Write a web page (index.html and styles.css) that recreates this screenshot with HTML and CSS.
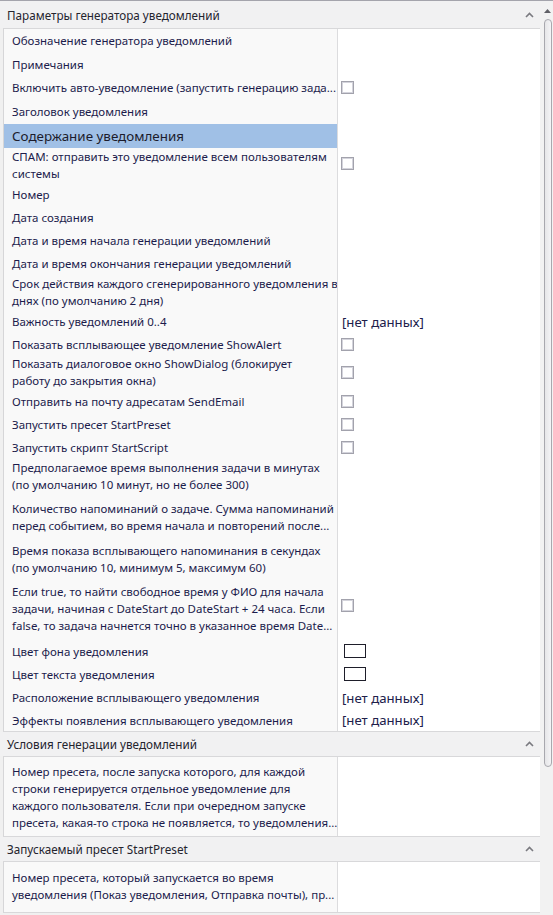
FILE: index.html
```html
<!DOCTYPE html>
<html lang="ru">
<head>
<meta charset="utf-8">
<title>Параметры генератора уведомлений</title>
<link rel="stylesheet" href="styles.css">
</head>
<body>
<div class="window">
  <div class="main">
    <section class="group">
      <div class="ghead ghead-first"><span class="gtitle">Параметры генератора уведомлений</span><svg class="chev" width="9" height="6" viewBox="0 0 9 6"><path d="M1 5 L4.5 1.5 L8 5" fill="none" stroke="#7a7a80" stroke-width="1.6"/></svg></div>
      <div class="grid">
        <div class="row h23"><div class="lbl">Обозначение генератора уведомлений</div><div class="val"></div></div>
        <div class="row h24"><div class="lbl">Примечания</div><div class="val"></div></div>
        <div class="row h23"><div class="lbl">Включить авто-уведомление (запустить генерацию зада...</div><div class="val"><span class="cb"></span></div></div>
        <div class="row h25"><div class="lbl">Заголовок уведомления</div><div class="val"></div></div>
        <div class="row h24 sel"><div class="lbl big">Содержание уведомления</div><div class="val"></div></div>
        <div class="row h35"><div class="lbl two">СПАМ: отправить это уведомление всем пользователям<br>системы</div><div class="val"><span class="cb up2"></span></div></div>
        <div class="row h23"><div class="lbl">Номер</div><div class="val"></div></div>
        <div class="row h23"><div class="lbl">Дата создания</div><div class="val"></div></div>
        <div class="row h23"><div class="lbl">Дата и время начала генерации уведомлений</div><div class="val"></div></div>
        <div class="row h23"><div class="lbl">Дата и время окончания генерации уведомлений</div><div class="val"></div></div>
        <div class="row h35"><div class="lbl two">Срок действия каждого сгенерированного уведомления в<br>днях (по умолчанию 2 дня)</div><div class="val"></div></div>
        <div class="row h23"><div class="lbl">Важность уведомлений 0..4</div><div class="val"><span class="nd">[нет данных]</span></div></div>
        <div class="row h22"><div class="lbl">Показать всплывающее уведомление ShowAlert</div><div class="val"><span class="cb"></span></div></div>
        <div class="row h35"><div class="lbl two">Показать диалоговое окно ShowDialog (блокирует<br>работу до закрытия окна)</div><div class="val"><span class="cb"></span></div></div>
        <div class="row h23"><div class="lbl">Отправить на почту адресатам SendEmail</div><div class="val"><span class="cb"></span></div></div>
        <div class="row h23"><div class="lbl">Запустить пресет StartPreset</div><div class="val"><span class="cb"></span></div></div>
        <div class="row h23"><div class="lbl">Запустить скрипт StartScript</div><div class="val"><span class="cb"></span></div></div>
        <div class="row h41 top"><div class="lbl">Предполагаемое время выполнения задачи в минутах<br>(по умолчанию 10 минут, но не более 300)</div><div class="val"></div></div>
        <div class="row h42 top"><div class="lbl">Количество напоминаний о задаче. Сумма напоминаний<br>перед событием, во время начала и повторений после...</div><div class="val"></div></div>
        <div class="row h41 top"><div class="lbl">Время показа всплывающего напоминания в секундах<br>(по умолчанию 10, минимум 5, максимум 60)</div><div class="val"></div></div>
        <div class="row h57 top"><div class="lbl">Если true, то найти свободное время у ФИО для начала<br>задачи, начиная с DateStart до DateStart + 24 часа. Если<br>false, то задача начнется точно в указанное время Date...</div><div class="val"><span class="cb cb-mid"></span></div></div>
        <div class="row h23"><div class="lbl">Цвет фона уведомления</div><div class="val"><span class="swatch"></span></div></div>
        <div class="row h23"><div class="lbl">Цвет текста уведомления</div><div class="val"><span class="swatch"></span></div></div>
        <div class="row h23"><div class="lbl">Расположение всплывающего уведомления</div><div class="val"><span class="nd">[нет данных]</span></div></div>
        <div class="row h22"><div class="lbl">Эффекты появления всплывающего уведомления</div><div class="val"><span class="nd">[нет данных]</span></div></div>
      </div>
    </section>
    <section class="group">
      <div class="ghead"><span class="gtitle">Условия генерации уведомлений</span><svg class="chev" width="9" height="6" viewBox="0 0 9 6"><path d="M1 5 L4.5 1.5 L8 5" fill="none" stroke="#7a7a80" stroke-width="1.6"/></svg></div>
      <div class="grid">
        <div class="row h79 top pad"><div class="lbl">Номер пресета, после запуска которого, для каждой<br>строки генерируется отдельное уведомление для<br>каждого пользователя. Если при очередном запуске<br>пресета, какая-то строка не появляется, то уведомления...</div><div class="val"></div></div>
      </div>
    </section>
    <section class="group">
      <div class="ghead"><span class="gtitle">Запускаемый пресет StartPreset</span><svg class="chev" width="9" height="6" viewBox="0 0 9 6"><path d="M1 5 L4.5 1.5 L8 5" fill="none" stroke="#7a7a80" stroke-width="1.6"/></svg></div>
      <div class="grid">
        <div class="row h50 top pad2"><div class="lbl">Номер пресета, который запускается во время<br>уведомления (Показ уведомления, Отправка почты), пр...</div><div class="val"></div></div>
      </div>
    </section>
  </div>
  <div class="scrollbar">
    <svg class="sarrow" width="7" height="4" viewBox="0 0 7 4"><path d="M0 4 L3.5 0 L7 4 Z" fill="#606066"/></svg>
    <div class="thumb"></div>
  </div>
</div>
</body>
</html>
```
FILE: styles.css
```css
html, body {
  margin: 0;
  padding: 0;
}
body {
  background: #f0f0f0;
  font-family: "Noto Sans", "Open Sans", sans-serif;
  font-size: 11.5px;
  color: #1c1c4c;
}
.window {
  width: 553px;
  height: 915px;
  display: flex;
  border-top: 1px solid #a4a4ac;
  box-sizing: border-box;
  overflow: hidden;
}
.main {
  width: 540px;
  display: flex;
  flex-direction: column;
}
.ghead {
  height: 24px;
  display: flex;
  align-items: center;
  justify-content: space-between;
  padding: 0 6px 0 7px;
  background: #f1f1f2;
  color: #24242e;
  font-size: 11.7px;
}
.ghead-first {
  height: 27px;
}
.chev {
  display: block;
}
.grid {
  margin-left: 3px;
  border-left: 1px solid #d6d6d8;
  border-top: 1px solid #d8d8da;
  border-bottom: 1px solid #d8d8da;
  background: #ffffff;
}
.row {
  display: flex;
  align-items: stretch;
}
.lbl {
  width: 325px;
  padding-left: 8px;
  border-right: 1px solid #dcdcde;
  background: #f9f9f9;
  display: flex;
  align-items: center;
  line-height: 17px;
  white-space: nowrap;
  overflow: hidden;
}
.lbl.two {
  line-height: 16.5px;
}
.lbl.big {
  font-size: 13.4px;
  color: #1c1c2c;
}
.row.sel .lbl {
  background: #a0c0e6;
}
.row.top .lbl {
  align-items: flex-start;
}
.row.pad .lbl {
  padding-top: 6px;
}
.row.pad2 .lbl {
  padding-top: 7px;
}
.val {
  flex: 1;
  display: flex;
  align-items: center;
  padding-left: 3px;
}
.h22 { height: 22px; }
.h23 { height: 23px; }
.h24 { height: 24px; }
.h25 { height: 25px; }
.h35 { height: 35px; }
.h41 { height: 41px; }
.h42 { height: 42px; }
.h50 { height: 50px; }
.h57 { height: 57px; }
.h79 { height: 79px; }
.cb {
  width: 13px;
  height: 13px;
  box-sizing: border-box;
  border: 1px solid #a2a2ac;
  box-shadow: inset 0 0 0 1px #d4d4dc;
  background: #ffffff;
}
.cb.up2 {
  margin-top: -4px;
}
.cb-mid {
  align-self: flex-start;
  margin-top: 16px;
}
.nd {
  font-size: 13.2px;
  color: #20204a;
  padding-left: 1px;
}
.swatch {
  width: 22px;
  height: 14px;
  box-sizing: border-box;
  border: 1px solid #1e1e2a;
  margin-left: 3px;
  margin-top: -2px;
}
.scrollbar {
  width: 13px;
  background: #f2f2f2;
  display: flex;
  flex-direction: column;
  align-items: center;
}
.sarrow {
  display: block;
  margin-top: 8px;
  margin-left: 2px;
}
.thumb {
  width: 8px;
  height: 748px;
  margin-top: 6px;
  margin-left: 2px;
  box-sizing: border-box;
  border: 1px solid #a8a8ae;
  border-radius: 4px;
  background: linear-gradient(to right, #e6e6e8, #f4f4f6);
}
```
